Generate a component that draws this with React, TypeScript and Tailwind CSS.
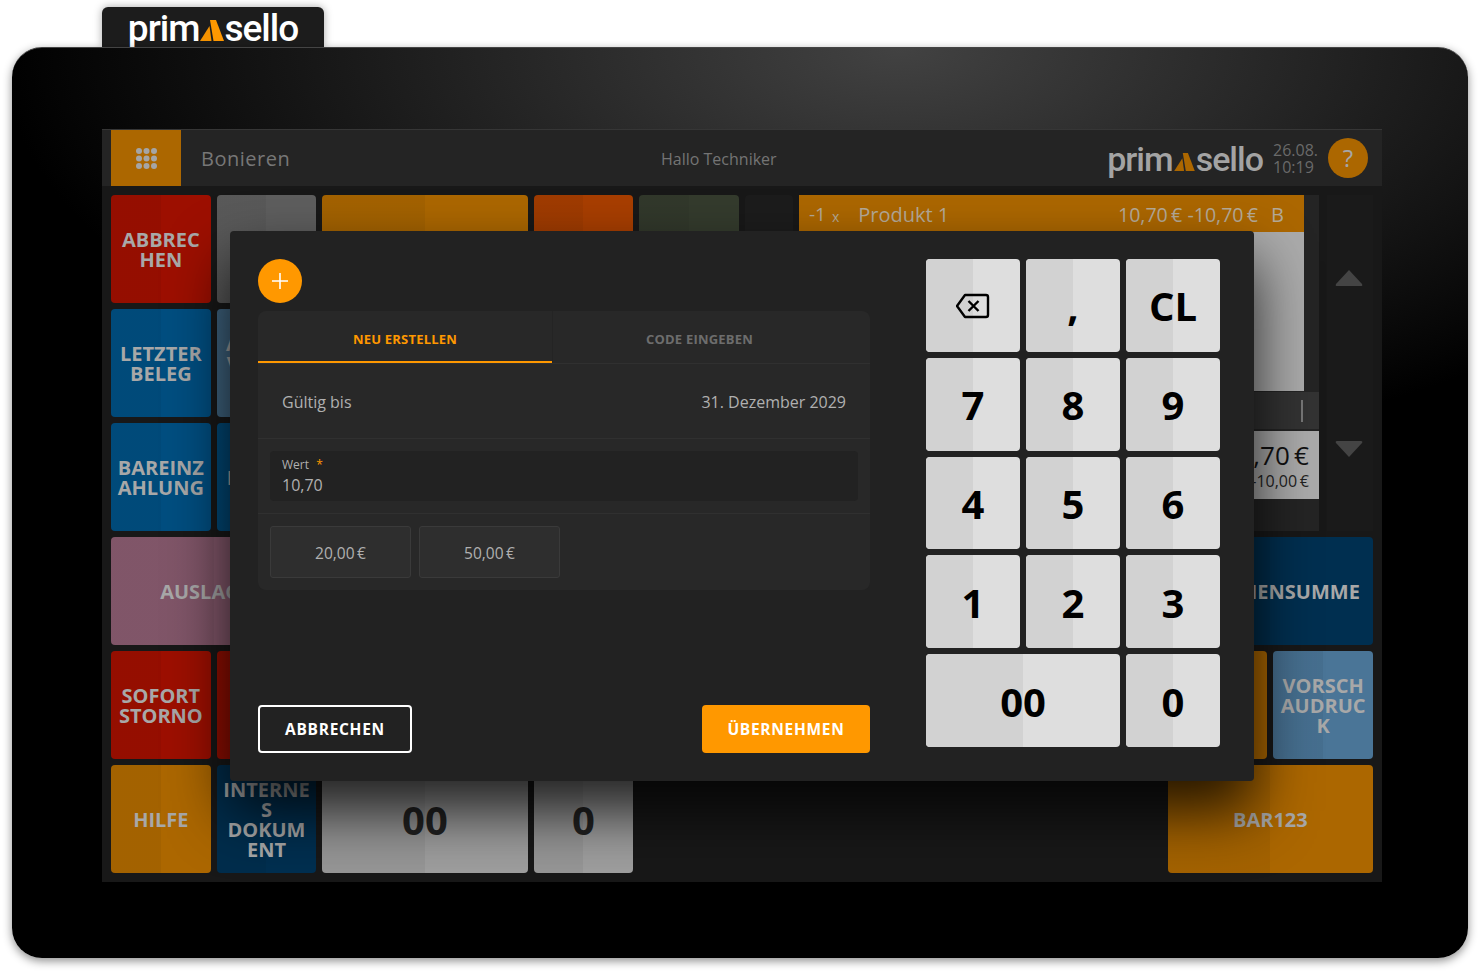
const font = { fontFamily: '"Open Sans", sans-serif' };

const half = "bg-[linear-gradient(90deg,rgba(0,0,0,0.05)_50%,transparent_50%)]";

interface TileProps {
  label?: string;
  color: string;
  span?: string;
  dark?: boolean;
}

const Tile = ({ label, color, span = "", dark }: TileProps) => (
  <div className={`${color} ${span} rounded-[4px] overflow-hidden`}>
    <div
      className={`${half} h-full w-full flex items-center justify-center px-1.5 pt-[2px] text-center break-words font-bold ${
        dark ? "text-[40px] text-[#222]" : "text-[20px] leading-[20px] text-[#a8a8a8]"
      }`}
    >
      <span className="w-full">{label}</span>
    </div>
  </div>
);

const Logo = ({ small }: { small?: boolean }) => (
  <div
    className={`flex items-baseline font-medium ${
      small
        ? "text-[#a3a3a3] text-[34px] tracking-[-1px] leading-[36px] pt-[2px]"
        : "text-white text-[37px] tracking-[-1px] leading-[40px]"
    }`}
    style={{ fontFamily: "Roboto, sans-serif" }}
  >
    <span>prim</span>
    <svg
      viewBox="0 0 24 21"
      className={small ? "w-[21px] h-[18px] ml-[1px] mr-[1px]" : "w-[24px] h-[21px] ml-[1px]"}
    >
      <path d="M0 21 L9.5 6 L11.5 21 Z" fill={small ? "#ac6700" : "#f59300"} />
      <path d="M10 0 H16 L24 21 H13.5 Z" fill={small ? "#ac6700" : "#ff9800"} />
    </svg>
    <span>sello</span>
  </div>
);

const keys = ["back", ",", "CL", "7", "8", "9", "4", "5", "6", "1", "2", "3", "00", "0"];

const Keypad = () => (
  <div className="w-[294px] h-[488px] grid grid-cols-3 grid-rows-5 gap-1.5">
    {keys.map((k) => (
      <div
        key={k}
        className={`bg-[#dedede] rounded-[4px] overflow-hidden ${k === "00" ? "col-span-2" : ""}`}
      >
        <div className="h-full pt-[2px] bg-[linear-gradient(90deg,#d2d2d2_50%,transparent_50%)] flex items-center justify-center text-[40px] font-bold text-black">
          {k === "back" ? (
            <svg viewBox="0 0 34 26" className="w-[34px] h-[26px]" fill="none" stroke="#000" strokeWidth="2.4">
              <path d="M9 2 H30 a2 2 0 0 1 2 2 V22 a2 2 0 0 1 -2 2 H9 L1 13 Z" strokeLinejoin="round" />
              <path d="M12.5 8 L22.5 18 M22.5 8 L12.5 18" />
            </svg>
          ) : (
            k
          )}
        </div>
      </div>
    ))}
  </div>
);

const Modal = () => (
  <div className="absolute z-10 left-[128px] top-[102px] w-[1024px] h-[550px] bg-[#222222] rounded-[4px] shadow-[0_30px_60px_rgba(0,0,0,0.8)] pt-[28px] pl-[28px] pr-[34px] flex justify-between">
    <div className="w-[612px] h-[494px] flex flex-col">
      <div className="w-[44px] h-[44px] rounded-full bg-[#ff9800] flex items-center justify-center">
        <svg viewBox="0 0 16 16" className="w-[16px] h-[16px]" stroke="#fff" strokeWidth="1.6">
          <path d="M8 0 V16 M0 8 H16" />
        </svg>
      </div>

      <div className="mt-2 bg-[#282828] rounded-lg h-[279px] flex flex-col">
        <div className="flex h-[53px] border-b border-[#303030]">
          <div className="w-[294px] h-[52px] pt-[8px] flex items-center justify-center text-[13px] tracking-[0.2px] font-bold text-[#ff9800] border-b-2 border-[#ff9800]">
            NEU ERSTELLEN
          </div>
          <div className="w-[294px] h-[52px] pt-[5px] flex items-center justify-center text-[13px] tracking-[0.2px] font-bold text-[#6d6d6d] border-l border-[#242424]">
            CODE EINGEBEN
          </div>
        </div>
        <div className="h-[75px] px-6 pt-[2px] flex items-center justify-between text-[16px] text-[#b0b0b0] border-b border-[#303030]">
          <span>Gültig bis</span>
          <span>31. Dezember 2029</span>
        </div>
        <div className="h-[75px] px-3 flex items-center border-b border-[#303030]">
          <div className="w-full h-[50px] bg-[#222222] rounded-[4px] px-3 pt-[6px]">
            <div className="text-[12px] leading-[16px] text-[#b0b0b0]">
              Wert <span className="text-[#ff9800] ml-1">*</span>
            </div>
            <div className="text-[16px] leading-[22px] pt-[1px] text-[#b0b0b0]">10,70</div>
          </div>
        </div>
        <div className="px-3 pt-3 flex gap-2">
          {["20,00\u2009€", "50,00\u2009€"].map((v) => (
            <div
              key={v}
              className="w-[141px] h-[52px] pt-[4px] bg-[#2e2e2e] border border-[#3a3a3a] rounded-[3px] flex items-center justify-center text-[15.5px] text-[#b0b0b0]"
            >
              {v}
            </div>
          ))}
        </div>
      </div>

      <div className="mt-auto flex justify-between">
        <div className="w-[154px] h-[48px] pt-[1px] border-2 border-white rounded-[4px] flex items-center justify-center text-white text-[15.5px] font-bold tracking-[0.7px]">
          ABBRECHEN
        </div>
        <div className="w-[168px] h-[48px] pt-[1px] bg-[#ff9800] rounded-[4px] flex items-center justify-center text-white text-[15.5px] font-bold tracking-[0.7px]">
          ÜBERNEHMEN
        </div>
      </div>
    </div>
    <Keypad />
  </div>
);

const Receipt = () => (
  <div className="row-span-3 col-span-6 flex">
    <div className="w-[48px] h-[108px] bg-[#1c1c1c] rounded-[4px]" />
    <div className="ml-1.5 w-[520px] h-[336px] bg-[#242424] flex flex-col">
      <div className="w-[505px] h-[196px] bg-[#ababab]">
        <div className="h-[37px] pt-[2px] bg-[#ac6700] flex items-center pl-[10px] pr-[20px] text-[#b5aa98] text-[20px]">
          <span className="text-[19px]">-1</span>
          <span className="text-[14px] ml-[6px] mt-1">x</span>
          <span className="ml-[19px]">Produkt 1</span>
          <span className="ml-auto text-[19.6px]">10,70{"\u2009"}€ -10,70{"\u2009"}€</span>
          <span className="ml-[13px]">B</span>
        </div>
      </div>
      <div className="mt-px h-[37px] bg-[#333333] relative">
        <div className="absolute left-[502px] top-[8px] w-[2px] h-[22px] bg-[#777777]" />
      </div>
      <div className="mt-[2px] h-[68px] bg-[#ababab] text-right pr-[10px] text-[#111]">
        <div className="text-[26px] leading-[36px] pt-[6px] font-medium">10,70{"\u2009"}€</div>
        <div className="text-[16px] leading-[16px] text-[#222]">-10,00{"\u2009"}€</div>
      </div>
    </div>
    <div className="ml-2 w-[46px] h-[336px] pr-[2px] bg-[#1a1a1a] flex flex-col items-center pt-[74px] gap-[153px]">
      <svg viewBox="0 0 28 18" className="w-[28px] h-[18px]" fill="#444444">
        <path d="M14 1 L27 15 Q28 17 26 17 H2 Q0 17 1 15 Z" />
      </svg>
      <svg viewBox="0 0 28 18" className="w-[28px] h-[18px]" fill="#444444">
        <path d="M14 17 L27 3 Q28 1 26 1 H2 Q0 1 1 3 Z" />
      </svg>
    </div>
  </div>
);

const Screen = () => (
  <div className="relative w-[1280px] h-[753px] bg-[#181818] overflow-hidden" style={font}>
    <div className="h-[57px] bg-[#242424] border-t border-[#363636] pl-[9px] pr-[14px] flex items-center relative">
      <div className="w-[70px] h-[56px] bg-[#ac6700] flex items-center justify-center">
        <svg viewBox="0 0 21 21" className="w-[21px] h-[21px]" fill="#a5a5a5">
          {[3, 10.5, 18].map((y) =>
            [3, 10.5, 18].map((x) => <circle key={`${x}-${y}`} cx={x} cy={y} r="3" />)
          )}
        </svg>
      </div>
      <span className="ml-5 pt-[2px] text-[20px] tracking-[0.5px] text-[#777777]">Bonieren</span>
      <span className="absolute left-[559px] top-[19px] text-[16px] leading-[20px] text-[#747474]">Hallo Techniker</span>
      <div className="ml-auto flex items-center">
        <Logo small />
        <div className="ml-[10px] pt-[2px] text-[16px] leading-[17px] text-[#6a6a6a] w-[45px]">
          26.08.
          <br />
          10:19
        </div>
        <div className="ml-[10px] w-[40px] h-[40px] rounded-full bg-[#ac6700] flex items-center justify-center text-[24px] text-[#a6a6a6]">
          ?
        </div>
      </div>
    </div>

    <div className="px-[9px] pt-[9px] grid grid-cols-12 gap-1.5 grid-rows-[repeat(6,108px)]">
      <Tile label="ABBRECHEN" color="bg-[#9d0f00]" />
      <Tile color="bg-[#5e5e5e]" />
      <Tile color="bg-[#ac6700]" span="col-span-2" />
      <Tile color="bg-[#a83e00]" />
      <Tile color="bg-[#343b2d]" />
      <Receipt />

      <Tile label="LETZTER BELEG" color="bg-[#004e80]" />
      <Tile label="ARTIKEL VERKAUF" color="bg-[#446c8a]" />
      <Tile color="bg-[#ababab]" />
      <Tile color="bg-[#ababab]" />
      <Tile color="bg-[#ababab]" />
      <Tile color="bg-[#ababab]" />

      <Tile label="BAREINZAHLUNG" color="bg-[#004e80]" />
      <Tile label="KARTEN" color="bg-[#004e80]" />
      <Tile color="bg-[#ababab]" />
      <Tile color="bg-[#ababab]" />
      <Tile color="bg-[#ababab]" />
      <Tile color="bg-[#ababab]" />

      <Tile label="AUSLAGEN" color="bg-[#875a6e]" span="col-span-2" />
      <Tile color="bg-[#ababab]" />
      <Tile color="bg-[#ababab]" />
      <Tile color="bg-[#ababab]" />
      <Tile color="bg-[#ababab]" />
      <div className="col-span-4" />
      <Tile label="ZWISCHENSUMME" color="bg-[#002f50]" span="col-span-2" />

      <Tile label="SOFORT STORNO" color="bg-[#9d0f00]" />
      <Tile color="bg-[#9d0f00]" />
      <Tile color="bg-[#ababab]" />
      <Tile color="bg-[#ababab]" />
      <Tile color="bg-[#ababab]" />
      <Tile color="bg-[#ababab]" />
      <div className="col-span-4" />
      <Tile color="bg-[#ac6700]" />
      <Tile label="VORSCHAUDRUCK" color="bg-[#4a7597]" />

      <Tile label="HILFE" color="bg-[#ac6700]" />
      <Tile label="INTERNES DOKUMENT" color="bg-[#002f50]" />
      <Tile label="00" color="bg-[#9e9e9e]" span="col-span-2" dark />
      <Tile label="0" color="bg-[#9e9e9e]" dark />
      <div className="col-span-5" />
      <Tile label="BAR123" color="bg-[#ac6700]" span="col-span-2" />
    </div>

    <Modal />
  </div>
);

export default function App() {
  return (
    <div className="w-[1480px] h-[975px] bg-white pt-[7px] overflow-hidden">
      <div className="ml-[102px] w-[222px] h-[40px] bg-[#1c1c1c] rounded-t-[6px] shadow-[0_0_8px_rgba(0,0,0,0.35)] flex items-start justify-center pt-[2px]">
        <Logo />
      </div>
      <div className="relative ml-3 w-[1456px] h-[911px] rounded-[30px] border-t border-[#444444] bg-[radial-gradient(ellipse_900px_420px_at_61%_0%,#424242,#000000)] shadow-[0_3px_10px_rgba(0,0,0,0.45)] pt-[81px] pl-[90px]">
        <Screen />
      </div>
    </div>
  );
}
